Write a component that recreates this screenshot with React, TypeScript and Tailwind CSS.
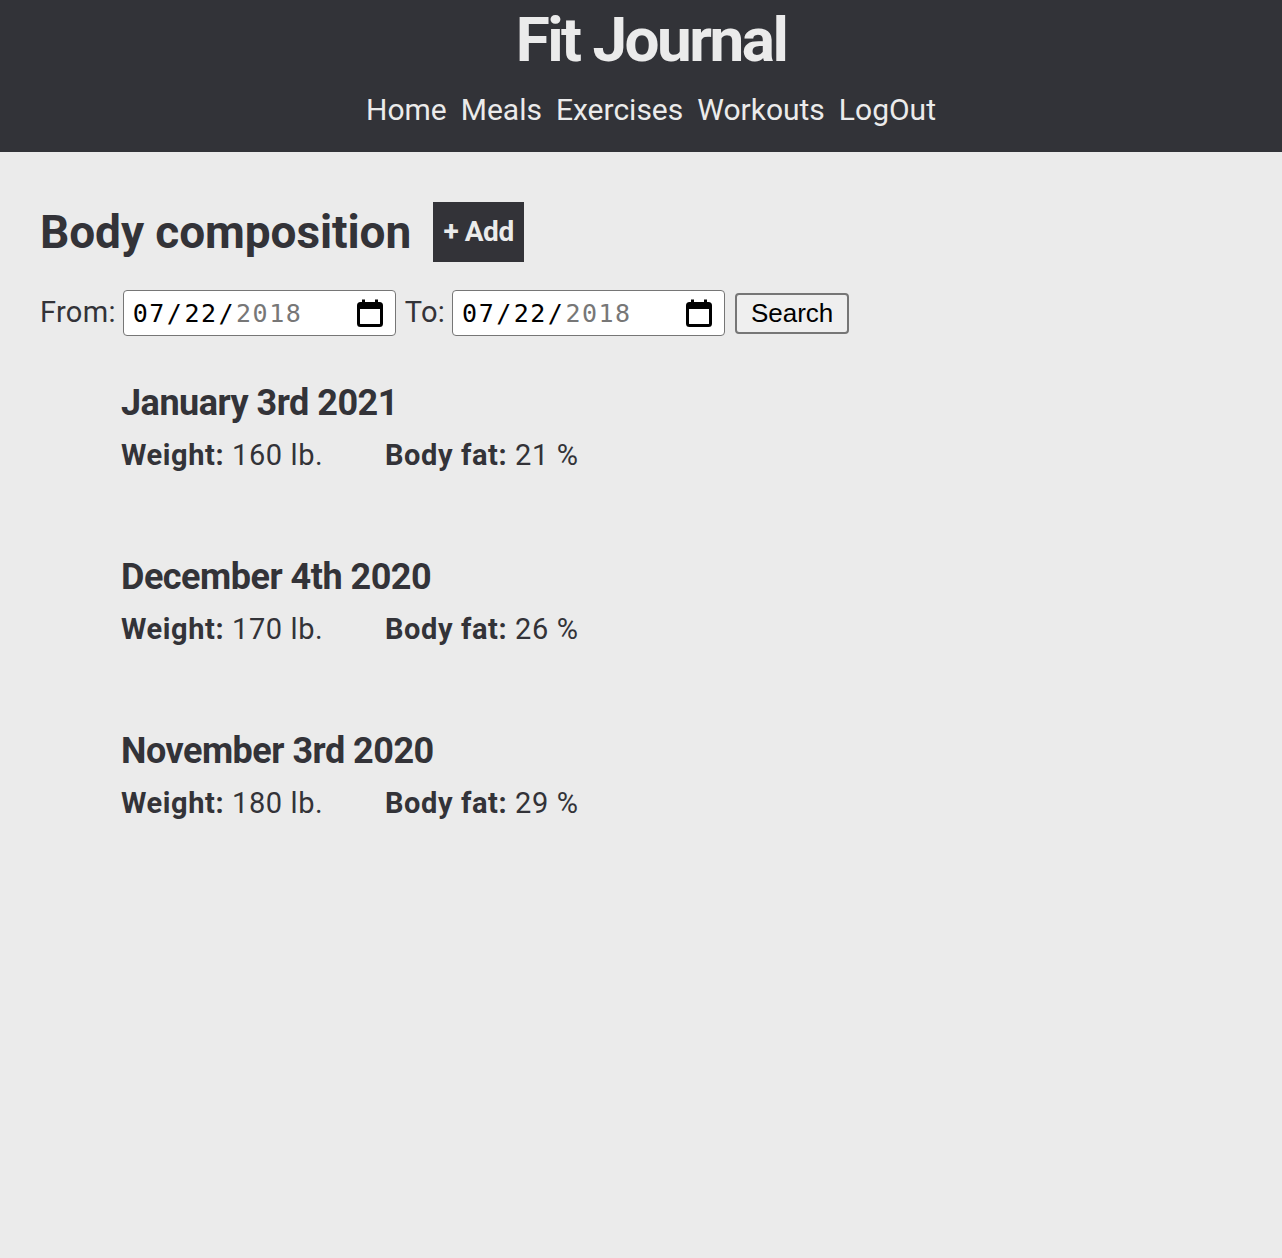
import React from "react";

const entries = [
  { date: "January 3rd 2021", weight: "160 lb.", fat: "21 %" },
  { date: "December 4th 2020", weight: "170 lb.", fat: "26 %" },
  { date: "November 3rd 2020", weight: "180 lb.", fat: "29 %" },
];

function CalendarIcon() {
  return (
    <svg width="28" height="30" viewBox="0 0 28 30" className="block">
      <rect x="2.5" y="5.5" width="23" height="22" rx="2" fill="none" stroke="#000" strokeWidth="3" />
      <rect x="2" y="5" width="24" height="6" fill="#000" />
      <rect x="6" y="1.5" width="3" height="5" fill="#000" />
      <rect x="19" y="1.5" width="3" height="5" fill="#000" />
    </svg>
  );
}

function DateBox() {
  return (
    <div className="flex h-[46px] w-[273px] items-center justify-between rounded-[4px] border-[1.5px] border-[#767676] bg-white pl-[9px] pr-[11px]">
      <div
        className="flex items-center text-[25px] leading-none tracking-[1.5px] text-black"
        style={{ fontFamily: '"DejaVu Sans Mono", "Liberation Mono", monospace' }}
      >
        <span>07</span>
        <span className="px-[1px]">/</span>
        <span>22</span>
        <span className="px-[1px]">/</span>
        <span className="text-[#777777]">2018</span>
      </div>
      <CalendarIcon />
    </div>
  );
}

export default function App() {
  return (
    <div
      className="min-h-[1258px] bg-[#ebebeb] text-[#333338]"
      style={{ fontFamily: 'Roboto, "Open Sans", sans-serif' }}
    >
      <header className="flex h-[152px] flex-col items-center bg-[#323338] pl-[20px]">
        <h1 className="text-[62px] font-bold leading-[80px] tracking-[-2.5px] text-[#ebebeb]">Fit Journal</h1>
        <nav className="mt-[10px] flex gap-[14px] text-[30px] leading-[40px] text-[#ebebeb]">
          <a>Home</a>
          <a>Meals</a>
          <a>Exercises</a>
          <a>Workouts</a>
          <a>LogOut</a>
        </nav>
      </header>

      <main className="px-[40px] pt-[50px]">
        <div className="flex items-center gap-[22px]">
          <h2 className="text-[46px] font-bold leading-[52px] tracking-[-0.1px]">Body composition</h2>
          <button className="flex h-[60px] w-[91px] items-center justify-center bg-[#333338] text-[28px] font-bold tracking-[-0.5px] text-[#ebebeb]">
            + Add
          </button>
        </div>

        <div className="mt-[28px] flex items-center">
          <span className="mr-[7px] text-[29px] tracking-[0.3px]">From:</span>
          <DateBox />
          <span className="ml-[9px] mr-[7px] text-[29px] tracking-[0.3px]">To:</span>
          <DateBox />
          <button
            className="ml-[10px] flex h-[41px] w-[114px] items-center justify-center rounded-[4px] border-2 border-[#767676] bg-[#efefef] text-[26px] text-black"
            style={{ fontFamily: '"Liberation Sans", Arial, sans-serif' }}
          >
            Search
          </button>
        </div>

        <div className="mt-[45px] flex flex-col gap-[82px] pl-[81px]">
          {entries.map((e) => (
            <div key={e.date}>
              <h3 className="text-[36px] font-bold leading-[44px] tracking-[-0.5px]">{e.date}</h3>
              <div className="mt-[12px] flex text-[29px] leading-[36px] tracking-[0.6px]">
                <div className="w-[264px]">
                  <span className="font-bold">Weight:</span> {e.weight}
                </div>
                <div>
                  <span className="font-bold">Body fat:</span> {e.fat}
                </div>
              </div>
            </div>
          ))}
        </div>
      </main>
    </div>
  );
}
